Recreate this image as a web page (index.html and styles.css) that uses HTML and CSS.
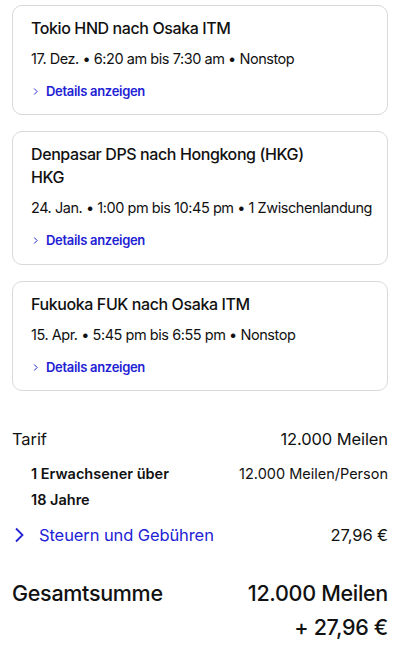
FILE: index.html
```html
<!DOCTYPE html>
<html lang="de">
<head>
    <meta charset="UTF-8">
    <meta name="viewport" content="width=device-width, initial-scale=1.0">
    <title>Flugübersicht</title>
    <link rel="stylesheet" href="styles.css">
</head>
<body>
    <div class="container">
        <!-- Flight segments -->
        <div class="flight-card">
            <h2 class="flight-title">Tokio HND nach Osaka ITM</h2>
            <p class="flight-info">17. Dez. • 6:20 am bis 7:30 am • Nonstop</p>
            <a href="#" class="details-link">
                <svg class="chevron-small" viewBox="0 0 8 10" width="6" height="9"><path d="M1.5 1l4 4-4 4" fill="none" stroke="currentColor" stroke-width="1.3"/></svg>
                Details anzeigen
            </a>
        </div>

        <div class="flight-card">
            <h2 class="flight-title">Denpasar DPS nach Hongkong (HKG)<br>HKG</h2>
            <p class="flight-info">24. Jan. • 1:00 pm bis 10:45 pm • 1 Zwischenlandung</p>
            <a href="#" class="details-link">
                <svg class="chevron-small" viewBox="0 0 8 10" width="6" height="9"><path d="M1.5 1l4 4-4 4" fill="none" stroke="currentColor" stroke-width="1.3"/></svg>
                Details anzeigen
            </a>
        </div>

        <div class="flight-card">
            <h2 class="flight-title">Fukuoka FUK nach Osaka ITM</h2>
            <p class="flight-info">15. Apr. • 5:45 pm bis 6:55 pm • Nonstop</p>
            <a href="#" class="details-link">
                <svg class="chevron-small" viewBox="0 0 8 10" width="6" height="9"><path d="M1.5 1l4 4-4 4" fill="none" stroke="currentColor" stroke-width="1.3"/></svg>
                Details anzeigen
            </a>
        </div>

        <!-- Price summary -->
        <div class="summary">
            <div class="summary-row">
                <span>Tarif</span>
                <span>12.000 Meilen</span>
            </div>
            <div class="summary-row traveler-row">
                <span class="traveler">1 Erwachsener über<br>18 Jahre</span>
                <span>12.000 Meilen/Person</span>
            </div>
            <div class="summary-row taxes-row">
                <a href="#" class="taxes-link">
                    <svg class="chevron" viewBox="0 0 10 16" width="10" height="16"><path d="M2 1.5l6.5 6.5-6.5 6.5" fill="none" stroke="currentColor" stroke-width="1.8"/></svg>
                    Steuern und Gebühren
                </a>
                <span>27,96 €</span>
            </div>
            <div class="summary-row total-row">
                <span>Gesamtsumme</span>
                <span class="total-value">12.000 Meilen<br>+ 27,96 €</span>
            </div>
        </div>
    </div>
</body>
</html>
```

FILE: styles.css
```css
body {
    margin: 0;
    background-color: #ffffff;
    font-family: Inter, "Noto Sans", sans-serif;
    color: #111;
}

.container {
    padding: 5px 16px 0 12px;
}

.flight-card {
    border: 1px solid #d9d9d9;
    border-radius: 10px;
    padding: 11px 10px 13px 18px;
    margin-bottom: 16px;
}

.flight-card:nth-child(2) {
    padding-bottom: 14px;
}

.flight-title {
    margin: 0;
    font-size: 16px;
    font-weight: 500;
    line-height: 23px;
    letter-spacing: -0.4px;
}

.flight-info {
    margin: 8px 0 0;
    font-size: 14.5px;
    line-height: 22px;
    letter-spacing: -0.45px;
    white-space: nowrap;
}

.details-link {
    display: flex;
    align-items: center;
    gap: 7px;
    margin-top: 11px;
    padding-left: 2px;
    font-size: 13px;
    font-weight: 600;
    line-height: 20px;
    letter-spacing: -0.3px;
    color: #2222d4;
    text-decoration: none;
}

.summary {
    margin-top: 36px;
    font-size: 16.5px;
}

.summary-row {
    display: flex;
    justify-content: space-between;
    align-items: flex-start;
    line-height: 24px;
    letter-spacing: -0.1px;
}

.traveler-row {
    margin-top: 10px;
    font-size: 14.5px;
    line-height: 26px;
    letter-spacing: 0;
}

.traveler {
    padding-left: 19px;
    font-weight: 600;
}

.taxes-row {
    margin-top: 10px;
}

.taxes-link {
    display: flex;
    align-items: center;
    gap: 15px;
    padding-left: 2px;
    color: #2222d4;
    text-decoration: none;
}

.total-row {
    margin-top: 29px;
    font-size: 21.5px;
    font-weight: 500;
    line-height: 34px;
    letter-spacing: -0.3px;
}

.total-value {
    text-align: right;
}
```
